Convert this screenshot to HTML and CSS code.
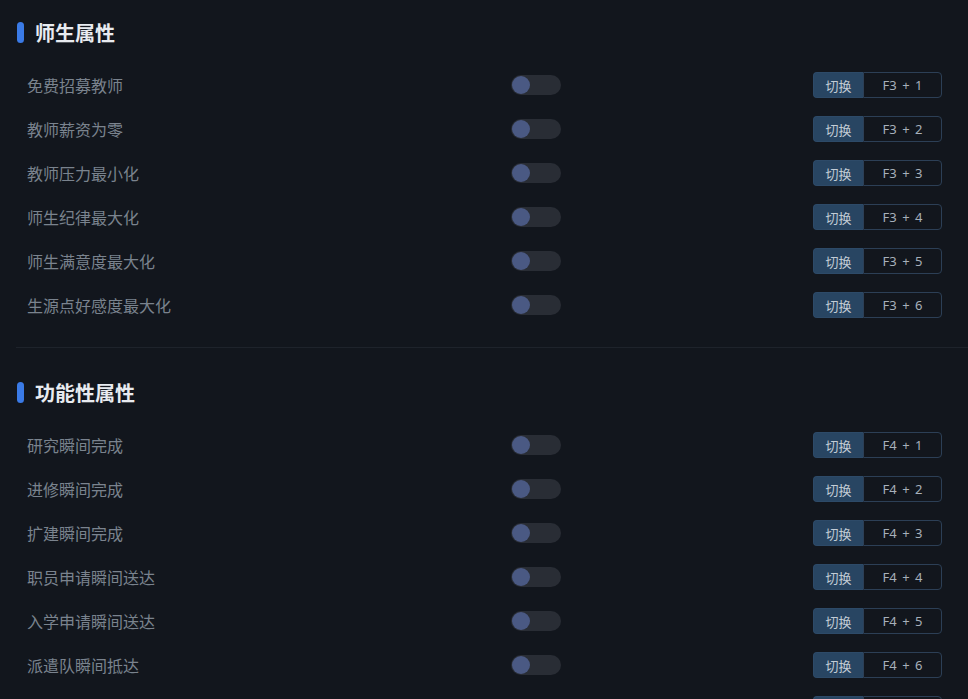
FILE: index.html
```html
<!DOCTYPE html>
<html lang="zh-CN">
<head>
    <meta charset="UTF-8">
    <meta name="viewport" content="width=device-width, initial-scale=1.0">
    <title>修改器选项</title>
    <link rel="stylesheet" href="styles.css">
</head>
<body>

    <div class="section">
        <h2 class="section-title"><span class="mark"></span>师生属性</h2>
        <div class="row">
            <span class="label">免费招募教师</span>
            <span class="toggle"><span class="knob"></span></span>
            <span class="hotkey"><span class="hk-action">切换</span><span class="hk-keys">F3 + 1</span></span>
        </div>
        <div class="row">
            <span class="label">教师薪资为零</span>
            <span class="toggle"><span class="knob"></span></span>
            <span class="hotkey"><span class="hk-action">切换</span><span class="hk-keys">F3 + 2</span></span>
        </div>
        <div class="row">
            <span class="label">教师压力最小化</span>
            <span class="toggle"><span class="knob"></span></span>
            <span class="hotkey"><span class="hk-action">切换</span><span class="hk-keys">F3 + 3</span></span>
        </div>
        <div class="row">
            <span class="label">师生纪律最大化</span>
            <span class="toggle"><span class="knob"></span></span>
            <span class="hotkey"><span class="hk-action">切换</span><span class="hk-keys">F3 + 4</span></span>
        </div>
        <div class="row">
            <span class="label">师生满意度最大化</span>
            <span class="toggle"><span class="knob"></span></span>
            <span class="hotkey"><span class="hk-action">切换</span><span class="hk-keys">F3 + 5</span></span>
        </div>
        <div class="row">
            <span class="label">生源点好感度最大化</span>
            <span class="toggle"><span class="knob"></span></span>
            <span class="hotkey"><span class="hk-action">切换</span><span class="hk-keys">F3 + 6</span></span>
        </div>
    </div>

    <div class="divider"></div>

    <div class="section">
        <h2 class="section-title"><span class="mark"></span>功能性属性</h2>
        <div class="row">
            <span class="label">研究瞬间完成</span>
            <span class="toggle"><span class="knob"></span></span>
            <span class="hotkey"><span class="hk-action">切换</span><span class="hk-keys">F4 + 1</span></span>
        </div>
        <div class="row">
            <span class="label">进修瞬间完成</span>
            <span class="toggle"><span class="knob"></span></span>
            <span class="hotkey"><span class="hk-action">切换</span><span class="hk-keys">F4 + 2</span></span>
        </div>
        <div class="row">
            <span class="label">扩建瞬间完成</span>
            <span class="toggle"><span class="knob"></span></span>
            <span class="hotkey"><span class="hk-action">切换</span><span class="hk-keys">F4 + 3</span></span>
        </div>
        <div class="row">
            <span class="label">职员申请瞬间送达</span>
            <span class="toggle"><span class="knob"></span></span>
            <span class="hotkey"><span class="hk-action">切换</span><span class="hk-keys">F4 + 4</span></span>
        </div>
        <div class="row">
            <span class="label">入学申请瞬间送达</span>
            <span class="toggle"><span class="knob"></span></span>
            <span class="hotkey"><span class="hk-action">切换</span><span class="hk-keys">F4 + 5</span></span>
        </div>
        <div class="row">
            <span class="label">派遣队瞬间抵达</span>
            <span class="toggle"><span class="knob"></span></span>
            <span class="hotkey"><span class="hk-action">切换</span><span class="hk-keys">F4 + 6</span></span>
        </div>
        <div class="row row-edge">
            <span class="label"></span>
            <span class="toggle"><span class="knob"></span></span>
            <span class="hotkey"><span class="hk-action"></span><span class="hk-keys"></span></span>
        </div>
    </div>

</body>
</html>
```

FILE: styles.css
```css
body {
    font-family: "Noto Sans CJK SC", "Noto Sans", sans-serif;
    background: #12161d;
    margin: 0;
    padding: 21px 0 0 0;
    overflow: hidden;
}

.section-title {
    display: flex;
    align-items: center;
    height: 22px;
    margin: 0 0 20px 17px;
    font-size: 20px;
    font-weight: bold;
    color: #e8ebf0;
}

.mark {
    width: 7px;
    height: 21px;
    border-radius: 4px;
    background: #3a7ae6;
    margin-right: 11px;
}

.row {
    display: grid;
    grid-template-columns: 484px 50px 1fr;
    align-items: center;
    height: 44px;
    padding: 0 26px 0 27px;
}

.label {
    font-size: 16px;
    color: #7a838e;
}

.toggle {
    position: relative;
    width: 50px;
    height: 20px;
    border-radius: 10px;
    background: #292d35;
}

.knob {
    position: absolute;
    left: 1px;
    top: 1px;
    width: 18px;
    height: 18px;
    border-radius: 50%;
    background: #4a5983;
}

.hotkey {
    justify-self: end;
    display: flex;
    height: 26px;
    font-size: 13px;
}

.hk-action {
    width: 50px;
    display: flex;
    align-items: center;
    justify-content: center;
    background: #284562;
    border: 1px solid #2d4a68;
    border-right: none;
    border-radius: 4px 0 0 4px;
    color: #c2ccd6;
    box-sizing: border-box;
}

.hk-keys {
    width: 79px;
    display: flex;
    align-items: center;
    justify-content: center;
    border: 1px solid #2c3f56;
    border-radius: 0 4px 4px 0;
    color: #a7b0ba;
    box-sizing: border-box;
    font-family: "Noto Sans", sans-serif;
    word-spacing: 2px;
}

.divider {
    height: 1px;
    background: #1e232b;
    margin: 20px 0 33px 16px;
}
```
